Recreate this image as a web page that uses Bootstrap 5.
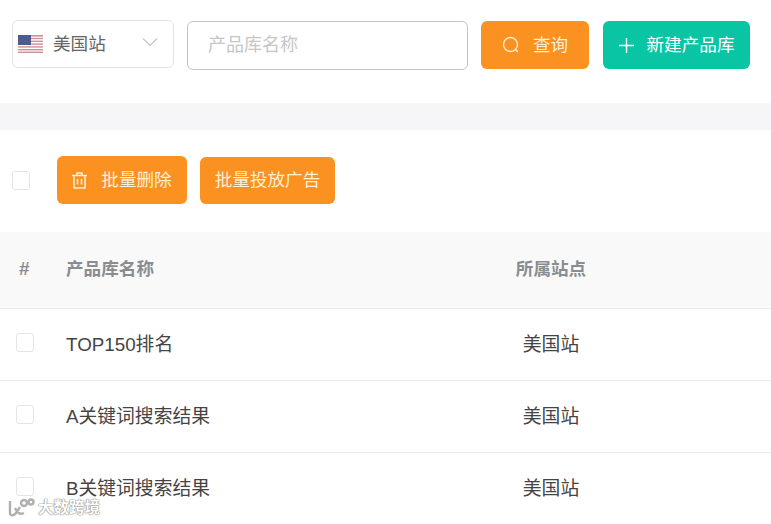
<!DOCTYPE html>
<html lang="zh-CN">
<head>
  <meta charset="UTF-8" />
  <meta name="viewport" content="width=device-width, initial-scale=1.0"/>
  <title>产品库</title>
  <link href="https://cdn.jsdelivr.net/npm/bootstrap@5.3.2/dist/css/bootstrap.min.css" rel="stylesheet"/>
  <style>
    html, body {
      height: 524px;
      overflow: hidden;
    }
    body {
      font-family: "Liberation Sans", "Noto Sans CJK SC", sans-serif;
      font-size: 17.6px;
      color: #444;
      position: relative;
    }
    .search-bar {
      height: 103px;
      padding: 20px 21px 0 12px;
    }
    .site-select {
      width: 162px;
      height: 48px;
      border: 1px solid #e2e2e4;
      border-radius: 6px;
      padding: 0 15px 0 5px;
      margin-right: 13px;
      color: #666;
    }
    .site-name {
      margin-left: 10px;
    }
    .name-input {
      width: 281px;
      height: 49px;
      margin: 1px 13px 0 0;
      border: 1px solid #c4c4c6;
      border-radius: 6px;
      padding: 0 20px;
      font-size: 18px;
      color: #555;
    }
    .name-input::placeholder {
      color: #c6c6c8;
    }
    .act-btn {
      height: 48px;
      border: 0;
      border-radius: 6px;
      font-size: 17.6px;
      color: #fff;
      padding: 0;
      display: inline-flex;
      align-items: center;
      justify-content: center;
    }
    .act-btn:hover, .act-btn:active {
      color: #fff;
    }
    .btn-amber, .btn-amber:hover {
      background: #fb9120;
      color: #fdf0d5;
    }
    .btn-teal, .btn-teal:hover {
      background: #0ac5a4;
    }
    .btn-query { width: 108px; margin-top: 1px; margin-right: 14px; gap: 13px; }
    .btn-create { width: 147px; margin-top: 1px; gap: 13px; }
    .btn-remove { width: 130px; gap: 14px; margin-right: 13px; }
    .btn-launch { width: 135px; height: 47px; margin-top: 1px; }
    .gray-band {
      height: 27px;
      background: #f6f6f8;
    }
    .bulk-bar {
      height: 102px;
      padding: 0 0 2px 12px;
    }
    .fake-check {
      display: block;
      width: 18px;
      height: 19px;
      border: 1px solid #e4e4e6;
      border-radius: 3px;
      background: #fff;
    }
    .bulk-bar .fake-check {
      margin-right: 27px;
    }
    .goods-table {
      table-layout: fixed;
      width: 771px;
      margin: 0;
      font-size: 18.8px;
    }
    .goods-table th, .goods-table td {
      vertical-align: middle;
      padding: 0;
      border-bottom: 1px solid #ebebed;
      color: #444;
      box-shadow: none;
    }
    .goods-table th {
      height: 76px;
      padding-bottom: 2px;
      background: #f9f9f9;
      color: #8a8d90;
      font-size: 17.6px;
      font-weight: 700;
    }
    .goods-table td {
      height: 72px;
      padding-top: 3px;
    }
    .goods-table tr:last-child td {
      border-bottom: 0;
      padding-top: 1px;
    }
    .goods-table .col-pick { width: 66px; }
    .goods-table .col-name { width: 385px; }
    .goods-table .col-site { width: 200px; text-align: center; }
    .goods-table .col-rest { width: 120px; }
    .goods-table .hash-cell {
      padding-left: 19px;
      font-size: 19px;
    }
    .goods-table td .fake-check {
      margin-left: 16px;
      margin-top: -6px;
    }
    .goods-table tr:last-child td .fake-check {
      margin-top: -4px;
    }
    .watermark {
      position: absolute;
      left: 8px;
      top: 497px;
      display: flex;
      align-items: center;
      gap: 3px;
      font-size: 15.5px;
      line-height: 22px;
      color: #fff;
      font-weight: 700;
      text-shadow: 0 0 1px #888, 0 0 1px #888, 0 0 2px #aaa;
    }
  </style>
</head>
<body>

  <div class="search-bar d-flex align-items-start">
    <div class="site-select d-flex align-items-center">
      <svg width="25" height="18" viewBox="0 0 25 18" class="flex-shrink-0">
        <rect width="25" height="18" fill="#fff"/>
        <g fill="#cf8f98">
          <rect width="25" height="1.6"/>
          <rect y="2.8" width="25" height="1.4"/>
          <rect y="5.6" width="25" height="1.4"/>
          <rect y="8.4" width="25" height="1.4"/>
          <rect y="11.2" width="25" height="1.4"/>
          <rect y="14" width="25" height="1.4"/>
          <rect y="16.6" width="25" height="1.4"/>
        </g>
        <rect width="13" height="10" fill="#4f5a8e"/>
      </svg>
      <span class="site-name">美国站</span>
      <svg width="16" height="10" viewBox="0 0 16 10" class="ms-auto mb-1" fill="none" stroke="#c4c4c6" stroke-width="1.2">
        <path d="M1 1.5 8 8.5 15 1.5"/>
      </svg>
    </div>
    <input class="name-input" type="text" placeholder="产品库名称" />
    <button class="btn act-btn btn-amber btn-query" type="button">
      <svg width="18" height="18" viewBox="0 0 18 18" fill="none" stroke="currentColor" stroke-width="1.4">
        <circle cx="8.5" cy="8.5" r="7"/>
        <path d="M13.5 13.5 16 16"/>
      </svg>
      查询
    </button>
    <button class="btn act-btn btn-teal btn-create" type="button">
      <svg width="15" height="15" viewBox="0 0 15 15" fill="none" stroke="currentColor" stroke-width="1.4">
        <path d="M7.5 0V15M0 7.5H15"/>
      </svg>
      新建产品库
    </button>
  </div>

  <div class="gray-band"></div>

  <div class="bulk-bar d-flex align-items-center">
    <span class="fake-check"></span>
    <button class="btn act-btn btn-amber btn-remove" type="button">
      <svg width="15" height="17" viewBox="0 0 15 17" fill="none" stroke="currentColor" stroke-width="1.5">
        <path d="M0 3.5H15M5 3.5V1H10V3.5M2 3.5V16H13V3.5M5.5 7V12.5M9.5 7V12.5"/>
      </svg>
      批量删除
    </button>
    <button class="btn act-btn btn-amber btn-launch" type="button">批量投放广告</button>
  </div>

  <table class="table goods-table">
    <thead>
      <tr>
        <th class="col-pick hash-cell">#</th>
        <th class="col-name">产品库名称</th>
        <th class="col-site">所属站点</th>
        <th class="col-rest"></th>
      </tr>
    </thead>
    <tbody>
      <tr>
        <td><span class="fake-check"></span></td>
        <td>TOP150排名</td>
        <td class="col-site">美国站</td>
        <td></td>
      </tr>
      <tr>
        <td><span class="fake-check"></span></td>
        <td>A关键词搜索结果</td>
        <td class="col-site">美国站</td>
        <td></td>
      </tr>
      <tr>
        <td><span class="fake-check"></span></td>
        <td>B关键词搜索结果</td>
        <td class="col-site">美国站</td>
        <td></td>
      </tr>
    </tbody>
  </table>

  <div class="watermark">
    <svg width="27" height="20" viewBox="0 0 27 20" fill="none" stroke="#b0b0b0" stroke-width="2.4">
      <path d="M2 3V15C2 18 6 18 8 15L12 9M7 10C9 15 12 17 16 15"/>
      <circle cx="16" cy="5" r="3"/>
      <circle cx="23" cy="4" r="2.5"/>
    </svg>
    <span>大数跨境</span>
  </div>

  <script src="https://cdn.jsdelivr.net/npm/bootstrap@5.3.2/dist/js/bootstrap.bundle.min.js"></script>
</body>
</html>
